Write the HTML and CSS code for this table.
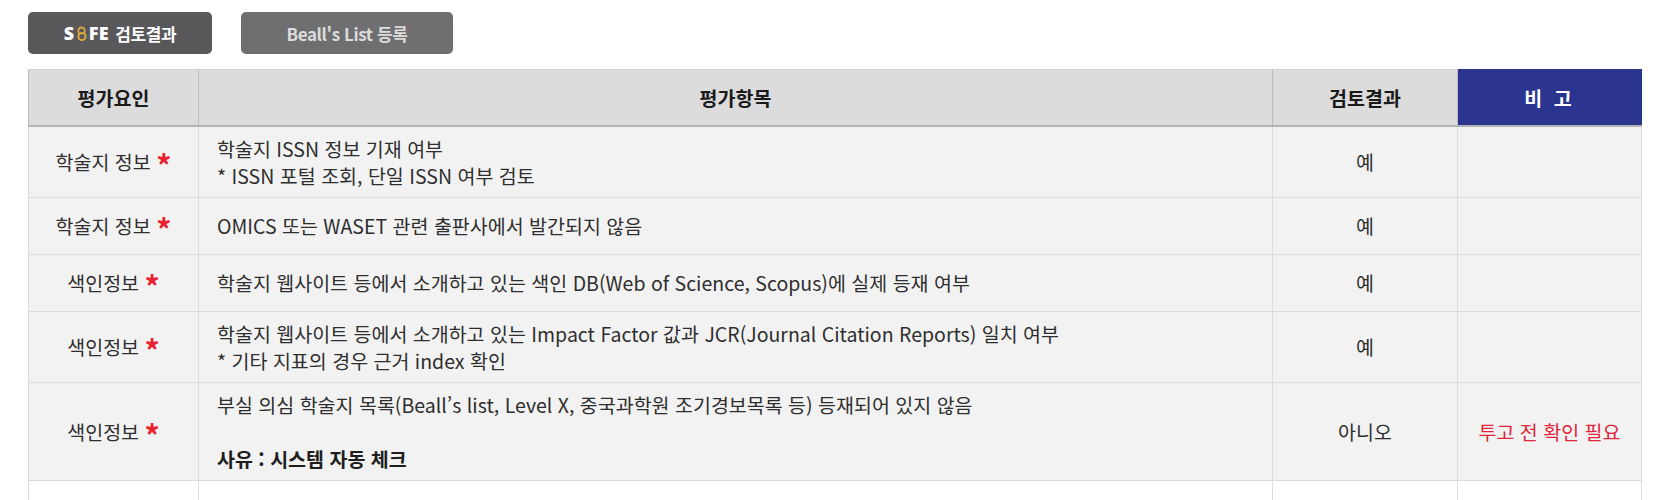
FILE: index.html
```html
<!DOCTYPE html>
<html lang="ko">
<head>
<meta charset="utf-8">
<title>SAFE 검토결과</title>
<link rel="stylesheet" href="styles.css">
</head>
<body>
<div class="page">
  <div class="tabs">
    <button class="tab tab-safe" type="button">
      <span class="logo">S<svg class="logo-a" viewBox="0 0 12 16" width="12" height="17" aria-hidden="true"><circle cx="6" cy="11" r="3.6" fill="none" stroke="#d9a93c" stroke-width="2"/><path d="M3.2 8.6 C1.5 6.5 2.2 2 5.6 2 C8.6 2 9.6 5 8.2 8.2" fill="none" stroke="#d9a93c" stroke-width="1.8" stroke-linecap="round"/></svg>FE</span>
      <span class="tab-label">검토결과</span>
    </button>
    <button class="tab tab-beall" type="button">Beall's List 등록</button>
  </div>

  <table class="review">
    <colgroup>
      <col class="c-factor">
      <col class="c-item">
      <col class="c-result">
      <col class="c-note">
    </colgroup>
    <thead>
      <tr>
        <th>평가요인</th>
        <th>평가항목</th>
        <th>검토결과</th>
        <th class="th-note">비 고</th>
      </tr>
    </thead>
    <tbody>
      <tr>
        <td class="factor">학술지 정보 <span class="req">*</span></td>
        <td class="item">학술지 ISSN 정보 기재 여부<br>* ISSN 포털 조회, 단일 ISSN 여부 검토</td>
        <td class="result">예</td>
        <td class="note"></td>
      </tr>
      <tr>
        <td class="factor">학술지 정보 <span class="req">*</span></td>
        <td class="item">OMICS 또는 WASET 관련 출판사에서 발간되지 않음</td>
        <td class="result">예</td>
        <td class="note"></td>
      </tr>
      <tr>
        <td class="factor">색인정보 <span class="req">*</span></td>
        <td class="item">학술지 웹사이트 등에서 소개하고 있는 색인 DB(Web of Science, Scopus)에 실제 등재 여부</td>
        <td class="result">예</td>
        <td class="note"></td>
      </tr>
      <tr>
        <td class="factor">색인정보 <span class="req">*</span></td>
        <td class="item">학술지 웹사이트 등에서 소개하고 있는 Impact Factor 값과 JCR(Journal Citation Reports) 일치 여부<br>* 기타 지표의 경우 근거 index 확인</td>
        <td class="result">예</td>
        <td class="note"></td>
      </tr>
      <tr>
        <td class="factor">색인정보 <span class="req">*</span></td>
        <td class="item">부실 의심 학술지 목록(Beall’s list, Level X, 중국과학원 조기경보목록 등) 등재되어 있지 않음<br><br><strong>사유 : 시스템 자동 체크</strong></td>
        <td class="result">아니오</td>
        <td class="note warn">투고 전 확인 필요</td>
      </tr>
      <tr class="blank">
        <td class="factor"></td>
        <td class="item"></td>
        <td class="result"></td>
        <td class="note"></td>
      </tr>
    </tbody>
  </table>
</div>
</body>
</html>
```

FILE: styles.css
```css
* { box-sizing: border-box; }

html, body {
  margin: 0;
  padding: 0;
  background: #ffffff;
}

body {
  font-family: "Noto Sans CJK KR", "Noto Sans", sans-serif;
  color: #2e2e2e;
}

.page {
  padding: 12px 0 0 28px;
}

.tabs {
  display: flex;
  gap: 29px;
  margin-bottom: 15px;
}

.tab {
  height: 42px;
  border: 0;
  border-radius: 5px;
  font-family: "Noto Sans CJK KR", "Noto Sans", sans-serif;
  font-size: 17px;
  font-weight: 700;
  letter-spacing: -0.4px;
  display: flex;
  align-items: center;
  justify-content: center;
  gap: 6px;
  padding: 0;
  cursor: pointer;
}

.tab-safe {
  width: 184px;
  background: #58585a;
  color: #ffffff;
}

.tab-beall {
  width: 212px;
  background: #6f6f72;
  color: #dcdcdc;
}

.logo {
  display: inline-flex;
  align-items: center;
  font-family: "Open Sans", "Noto Sans", sans-serif;
  font-weight: 800;
  font-size: 18px;
  letter-spacing: 0.5px;
}

.logo-a {
  margin: 1px 1px 0 1px;
}

.review {
  width: 1613px;
  border-collapse: collapse;
  table-layout: fixed;
  font-size: 19.5px;
}

.c-factor { width: 170px; }
.c-item { width: 1074px; }
.c-result { width: 185px; }
.c-note { width: 184px; }

.review th {
  height: 56px;
  background: #dcdcdc;
  color: #1a1a1a;
  font-weight: 700;
  font-size: 19.5px;
  text-align: center;
  border-top: 1px solid #d2d2d2;
  border-bottom: 2px solid #b2b2b2;
  border-left: 1px solid #bcbcbc;
  border-right: 1px solid #bcbcbc;
  padding: 0;
}

.review th.th-note {
  background: #2b3590;
  color: #ffffff;
  border-left-color: #2b3590;
  border-right-color: #2b3590;
  border-top-color: #2b3590;
  letter-spacing: 3px;
}

.review td {
  background: #f2f2f2;
  border: 1px solid #dcdcdc;
  padding: 8px 18px;
  line-height: 27px;
  height: 57px;
  vertical-align: middle;
  color: #2e2e2e;
}

.review td.factor,
.review td.result,
.review td.note {
  text-align: center;
}

.review td.item {
  text-align: left;
}

.review td.item strong {
  font-weight: 700;
  color: #1e1e1e;
}

.req {
  color: #e8232f;
  font-weight: 700;
  font-size: 30px;
  line-height: 0;
  vertical-align: -7px;
}

.review td.warn {
  color: #e0243a;
}

.review tr.blank td {
  background: #ffffff;
  height: 60px;
}
```
